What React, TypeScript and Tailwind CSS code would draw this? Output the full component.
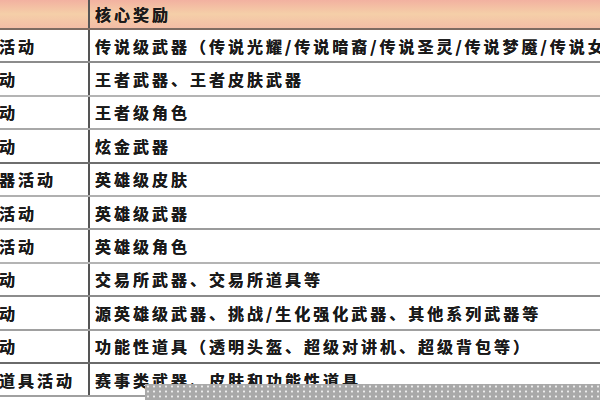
import React from "react"

type Row = { name: string; reward: string; line: string }

const rows: Row[] = [
  { name: "传说级活动", reward: "传说级武器（传说光耀/传说暗裔/传说圣灵/传说梦魇/传说女神）", line: "border-[#8c8c8c]" },
  { name: "王者活动", reward: "王者武器、王者皮肤武器", line: "border-[#b4b4b4]" },
  { name: "角色活动", reward: "王者级角色", line: "border-[#a8a8a8]" },
  { name: "炫金活动", reward: "炫金武器", line: "border-[#6e6e6e]" },
  { name: "英雄武器活动", reward: "英雄级皮肤", line: "border-[#b0b0b0]" },
  { name: "英雄级活动", reward: "英雄级武器", line: "border-[#9c9c9c]" },
  { name: "角色类活动", reward: "英雄级角色", line: "border-[#b4b4b4]" },
  { name: "交易活动", reward: "交易所武器、交易所道具等", line: "border-[#8c8c8c]" },
  { name: "其他活动", reward: "源英雄级武器、挑战/生化强化武器、其他系列武器等", line: "border-[#a0a0a0]" },
  { name: "道具活动", reward: "功能性道具（透明头盔、超级对讲机、超级背包等）", line: "border-[#6a6a6a]" },
  { name: "赛事类道具活动", reward: "赛事类武器、皮肤和功能性道具", line: "border-[#a0a0a0]" },
]

export default function App() {
  return (
    <div
      className="relative w-[600px] h-[400px] overflow-hidden bg-white text-[#1a1a1a] font-bold text-[16px] tracking-[3px] [text-shadow:0_0_0.6px_#1a1a1a]"
      style={{ fontFamily: '"Noto Sans CJK SC", "Noto Sans", sans-serif' }}
    >
      <div className="-ml-[60px] w-[660px] flex flex-col">
        <div className="flex h-[30px] shrink-0 border-b-2 border-[#7d6b62] bg-linear-to-b from-[#f2b1a0] via-[#f5cfa8] to-[#f3bda6]">
          <div className="w-[150px] shrink-0 border-r-2 border-[#555] pl-[4px] flex items-center whitespace-nowrap overflow-hidden">活动</div>
          <div className="flex-1 pl-[5px] flex items-center whitespace-nowrap overflow-hidden">核心奖励</div>
        </div>
        {rows.map((r) => (
          <div key={r.name} className={`flex h-[33.4px] shrink-0 border-b-2 ${r.line}`}>
            <div className="w-[150px] shrink-0 border-r-2 border-[#555] pl-[2px] flex items-center whitespace-nowrap overflow-hidden">
              {r.name}
            </div>
            <div className="flex-1 pl-[5px] flex items-center whitespace-nowrap overflow-hidden">{r.reward}</div>
          </div>
        ))}
      </div>
      <div className="absolute left-[145px] top-[384px] right-0 bottom-0 bg-[#a9a9a9] bg-[radial-gradient(circle,#ececec_1px,transparent_1.2px)] bg-size-[6px_5px]" />
    </div>
  )
}
